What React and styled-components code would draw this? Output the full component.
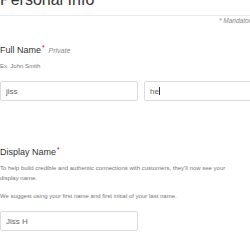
import React from "react";
import styled, { createGlobalStyle } from "styled-components";

const Global = createGlobalStyle`
  html, body { margin: 0; padding: 0; background: #fff; overflow: hidden; }
  body { font-family: "Liberation Sans", Arial, sans-serif; }
`;

const Page = styled.div`
  width: 282px;
  display: flex;
  flex-direction: column;
`;

const Title = styled.h1`
  margin: -8px 0 0;
  padding-bottom: 7px;
  font-size: 16px;
  line-height: 16px;
  font-weight: 400;
  color: #333;
  border-bottom: 1px solid #ececec;
`;

const Mandatory = styled.div`
  margin-top: 1px;
  padding-left: 219px;
  font-size: 6.5px;
  line-height: 8px;
  font-style: italic;
  color: #888;
  white-space: nowrap;
`;

const Section = styled.section`
  display: flex;
  flex-direction: column;
  margin-top: ${(p) => p.$top}px;
`;

const Label = styled.div`
  display: flex;
  align-items: baseline;
  gap: 4px;
  font-size: 9px;
  line-height: 11px;
  color: #333;
`;

const Star = styled.sup`
  color: #d0021b;
  font-size: 6.5px;
  vertical-align: top;
  line-height: 6px;
  margin-left: 1px;
`;

const Private = styled.span`
  font-size: 7px;
  font-style: italic;
  color: #888;
`;

const Help = styled.p`
  margin: ${(p) => p.$top}px 0 0;
  max-width: 236px;
  font-size: 6px;
  line-height: 10px;
  color: #777;
`;

const Row = styled.div`
  display: grid;
  grid-template-columns: 138px 138px;
  gap: 6px;
  margin-top: ${(p) => p.$top}px;
`;

const Input = styled.div`
  box-sizing: border-box;
  height: 20px;
  border: 1px solid #dcdcdc;
  border-radius: 2px;
  padding: 0 5px;
  display: flex;
  align-items: center;
  font-size: 8px;
  color: #666;
`;

const Caret = styled.span`
  display: inline-block;
  width: 1px;
  height: 8px;
  background: #333;
  margin-left: 0.5px;
`;

export default function App() {
  return (
    <Page>
      <Global />
      <Title>Personal Info</Title>
      <Mandatory>* Mandatory</Mandatory>
      <Section $top={20}>
        <Label>
          <span>
            Full Name<Star>*</Star>
          </span>
          <Private>Private</Private>
        </Label>
        <Help $top={5}>Ex. John Smith</Help>
        <Row $top={10}>
          <Input>jiss</Input>
          <Input>
            he<Caret />
          </Input>
        </Row>
      </Section>
      <Section $top={46}>
        <Label>
          <span>
            Display Name<Star>*</Star>
          </span>
        </Label>
        <Help $top={5}>
          To help build credible and authentic connections with customers, they'll now see your
          display name.
        </Help>
        <Help $top={8}>We suggest using your first name and first initial of your last name.</Help>
        <Row $top={10}>
          <Input>Jiss H</Input>
        </Row>
      </Section>
    </Page>
  );
}
